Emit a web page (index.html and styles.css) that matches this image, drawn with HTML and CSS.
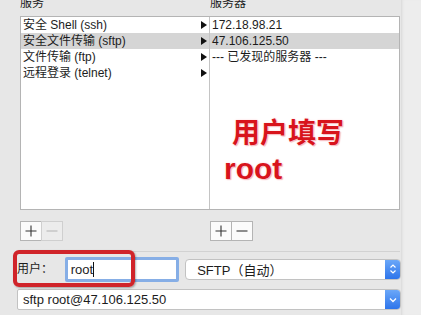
FILE: index.html
```html
<!DOCTYPE html>
<html>
<head>
<meta charset="utf-8">
<link rel="stylesheet" href="styles.css">
</head>
<body>
<div class="page">
  <div class="main">
    <div class="headers">
      <div class="hcol left">服务</div>
      <div class="hcol">服务器</div>
    </div>
    <div class="lists">
      <div class="pane pane-left">
        <div class="row"><span>安全 Shell (ssh)</span><i class="tri"></i></div>
        <div class="row sel"><span>安全文件传输 (sftp)</span><i class="tri"></i></div>
        <div class="row"><span>文件传输 (ftp)</span><i class="tri"></i></div>
        <div class="row"><span>远程登录 (telnet)</span><i class="tri"></i></div>
      </div>
      <div class="pane pane-right">
        <div class="row"><span>172.18.98.21</span></div>
        <div class="row sel"><span>47.106.125.50</span></div>
        <div class="row"><span>--- 已发现的服务器 ---</span></div>
        <div class="note">
          <div class="note-cn">用户填写</div>
          <div class="note-en">root</div>
        </div>
      </div>
    </div>
    <div class="btnrow">
      <div class="pm pm-left">
        <div class="btn">
          <svg width="12" height="12" viewBox="0 0 12 12"><path d="M6 0.5V11.5M0.5 6H11.5" stroke="#333" stroke-width="1.1"/></svg>
        </div>
        <div class="btn dis">
          <svg width="12" height="12" viewBox="0 0 12 12"><path d="M0.5 6H11.5" stroke="#b8b8b8" stroke-width="1.1"/></svg>
        </div>
      </div>
      <div class="pm">
        <div class="btn">
          <svg width="12" height="12" viewBox="0 0 12 12"><path d="M6 0.5V11.5M0.5 6H11.5" stroke="#333" stroke-width="1.1"/></svg>
        </div>
        <div class="btn">
          <svg width="12" height="12" viewBox="0 0 12 12"><path d="M0.5 6H11.5" stroke="#333" stroke-width="1.1"/></svg>
        </div>
      </div>
    </div>
    <div class="sep"></div>
    <div class="userrow">
      <div class="ulabel">用户：</div>
      <div class="uinput"><span>root</span><i class="caret"></i></div>
      <div class="select">
        <span class="seltext">SFTP（自动）</span>
        <div class="bluebtn">
          <svg width="8" height="12" viewBox="0 0 8 12"><path d="M1.5 4.5L4 2L6.5 4.5M1.5 7.5L4 10L6.5 7.5" fill="none" stroke="#fff" stroke-width="1.2"/></svg>
        </div>
      </div>
      <div class="redbox"></div>
    </div>
    <div class="combo">
      <span class="seltext">sftp root@47.106.125.50</span>
      <div class="bluebtn">
        <svg width="10" height="8" viewBox="0 0 10 8"><path d="M2 2.5L5 5.5L8 2.5" fill="none" stroke="#fff" stroke-width="1.3"/></svg>
      </div>
    </div>
  </div>
  <div class="strip"></div>
</div>
</body>
</html>
```
FILE: styles.css
```css
html, body {
  margin: 0;
  padding: 0;
}
body {
  width: 421px;
  height: 315px;
  overflow: hidden;
  background: #e7e7e7;
  font-family: "Liberation Sans", "Noto Sans CJK SC", sans-serif;
  font-size: 12px;
  color: #1c1c1c;
}
.page {
  display: flex;
  height: 315px;
}
.main {
  width: 401px;
  flex: none;
}
.strip {
  flex: 1;
  background: #ededed;
  box-shadow: inset 3px 0 3px -2px #d6d6d6;
}
.headers {
  display: flex;
  margin-top: -5px;
  height: 21px;
  line-height: 16px;
  padding-left: 20px;
}
.hcol.left {
  width: 190px;
}
.lists {
  display: flex;
  margin-left: 20px;
  width: 378px;
  height: 192px;
  border: 1px solid #b4b4b4;
  background: #fff;
}
.pane-left {
  width: 188px;
  border-right: 1px solid #c4c4c4;
}
.pane-right {
  flex: 1;
  position: relative;
}
.row {
  height: 16px;
  line-height: 16px;
  display: flex;
  align-items: center;
  padding-left: 2px;
}
.row span {
  flex: 1;
}
.row.sel {
  background: #d5d5d5;
}
.tri {
  width: 0;
  height: 0;
  border-top: 4px solid transparent;
  border-bottom: 4px solid transparent;
  border-left: 6px solid #111;
  margin-right: 2px;
}
.note {
  position: absolute;
  left: 14px;
  top: 96px;
  color: #d8141c;
  font-weight: bold;
  text-shadow: 0 0 1px #fff, 0 0 2px #ffc8cc, 1px 1px 1px #f3b0b4;
}
.note-cn {
  font-family: "Noto Sans CJK SC", sans-serif;
  font-size: 28px;
  line-height: 36px;
  margin-left: 8px;
}
.note-en {
  font-family: "Liberation Sans", sans-serif;
  font-size: 30px;
  line-height: 36px;
  margin-top: 2px;
}
.btnrow {
  display: flex;
  margin-top: 11px;
  height: 19px;
}
.pm {
  display: flex;
}
.pm-left {
  margin-left: 20px;
  width: 190px;
}
.btn {
  width: 20px;
  height: 18px;
  border: 1px solid #b4b4b4;
  background: #fbfbfb;
  display: flex;
  align-items: center;
  justify-content: center;
  margin-right: -1px;
}
.btn.dis {
  background: #ececec;
  border-color: #cfcfcf;
}
.sep {
  margin: 11px 0 0 20px;
  width: 380px;
  height: 1px;
  background: #d2d2d2;
}
.userrow {
  position: relative;
  display: flex;
  align-items: center;
  margin-top: 4px;
  height: 26px;
}
.ulabel {
  margin-left: 17px;
  width: 48px;
  line-height: 16px;
}
.uinput {
  width: 106px;
  height: 19px;
  border: 3px solid #86aee6;
  border-radius: 2px;
  background: #fff;
  display: flex;
  align-items: center;
  font-size: 13px;
  padding-left: 3px;
}
.caret {
  width: 1px;
  height: 15px;
  background: #111;
}
.select {
  margin-left: 6px;
  width: 215px;
  height: 19px;
  border: 1px solid #c2c2c2;
  border-radius: 4px;
  background: #fff;
  display: flex;
  align-items: center;
  font-size: 13px;
  overflow: hidden;
}
.seltext {
  flex: 1;
  padding-left: 11px;
}
.bluebtn {
  width: 16px;
  height: 21px;
  margin: -1px -1px -1px 0;
  border-radius: 0 4px 4px 0;
  background: linear-gradient(#6eaaf9, #2a72ea);
  display: flex;
  align-items: center;
  justify-content: center;
}
.redbox {
  position: absolute;
  left: 13px;
  top: -6px;
  width: 114px;
  height: 29px;
  border: 4px solid #d0242a;
  border-radius: 6px;
  box-shadow: 1px 1px 2px rgba(0,0,0,0.3);
}
.combo {
  margin: 7px 0 0 17px;
  width: 382px;
  height: 19px;
  border: 1px solid #c2c2c2;
  border-radius: 2px 4px 4px 2px;
  background: #fff;
  display: flex;
  align-items: center;
  font-size: 13px;
  overflow: hidden;
}
.combo .seltext {
  padding-left: 5px;
}
```
